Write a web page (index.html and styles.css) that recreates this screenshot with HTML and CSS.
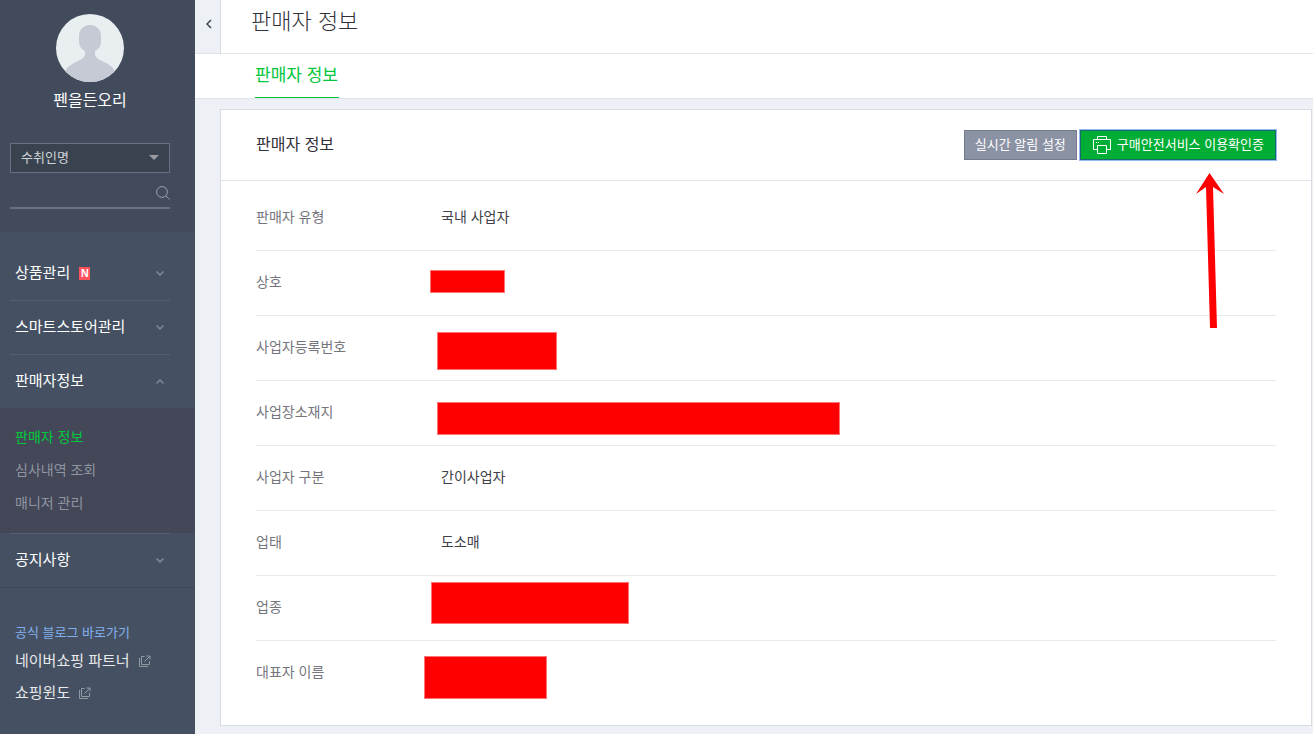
FILE: index.html
```html
<!DOCTYPE html>
<html lang="ko">
<head>
  <meta charset="UTF-8" />
  <meta name="viewport" content="width=device-width, initial-scale=1.0"/>
  <title>판매자 정보</title>
  <link rel="stylesheet" href="styles.css">
</head>
<body>

  <aside class="sidebar">
    <div class="profile">
      <svg class="avatar" viewBox="0 0 68 68" aria-hidden="true">
        <defs><clipPath id="round"><circle cx="34" cy="34" r="34"/></clipPath></defs>
        <g clip-path="url(#round)">
          <rect width="68" height="68" fill="#e9eef1"/>
          <path fill="#c5cad4" d="M34 11c7 0 11 5 11 11v6c0 4-2 7-6 9v3c0 3 3 5 7 7 6 3 10 5 12 9v12H10V56c2-4 6-6 12-9 4-2 7-4 7-7v-3c-4-2-6-5-6-9v-6c0-6 4-11 11-11z"/>
        </g>
      </svg>
      <div class="store-name">펜을든오리</div>
      <form class="search">
        <div class="select-wrap">
          <select aria-label="검색 조건">
            <option>수취인명</option>
          </select>
        </div>
        <div class="search-box">
          <input type="text" aria-label="검색어">
          <button type="button" aria-label="검색">
            <svg width="14" height="14" viewBox="0 0 14 14" fill="none" stroke="#99a0aa"><circle cx="6" cy="6" r="5.4"/><path d="M10 10l3.6 3.6"/></svg>
          </button>
        </div>
      </form>
    </div>

    <nav>
      <ul class="menu">
        <li><a href="#">상품관리 <span class="badge-new">N</span>
          <svg class="chevron" viewBox="0 0 8 5"><path d="M.5.5L4 4 7.5.5"/></svg></a></li>
        <li><a href="#">스마트스토어관리
          <svg class="chevron" viewBox="0 0 8 5"><path d="M.5.5L4 4 7.5.5"/></svg></a></li>
        <li><a href="#">판매자정보
          <svg class="chevron" viewBox="0 0 8 5"><path d="M.5 4.5L4 1l3.500 3.500"/></svg></a>
          <ul class="submenu">
            <li><a href="#" class="active">판매자 정보</a></li>
            <li><a href="#">심사내역 조회</a></li>
            <li><a href="#">매니저 관리</a></li>
          </ul>
        </li>
        <li><a href="#">공지사항
          <svg class="chevron" viewBox="0 0 8 5"><path d="M.5.5L4 4 7.5.5"/></svg></a></li>
      </ul>
    </nav>

    <div class="side-links">
      <a href="#" class="blog">공식 블로그 바로가기</a>
      <a href="#">네이버쇼핑 파트너
        <svg class="external" viewBox="0 0 12 12"><path d="M5.500 1.500h-3v8h8V6M.5 3v8.500H9M7.500 1h3.500v3.500M11 1L5.500 6.500"/></svg></a>
      <a href="#">쇼핑윈도
        <svg class="external" viewBox="0 0 12 12"><path d="M5.500 1.500h-3v8h8V6M.5 3v8.500H9M7.500 1h3.500v3.500M11 1L5.500 6.500"/></svg></a>
    </div>
  </aside>

  <main class="content">
    <header class="page-header">
      <button type="button" class="collapse" aria-label="메뉴 접기">
        <svg width="6" height="10" viewBox="0 0 6 10" fill="none" stroke="#3a4252" stroke-width="1.500"><path d="M5 1L1 5l4 4"/></svg>
      </button>
      <h1>판매자 정보</h1>
    </header>
    <div class="tabs">
      <a href="#" class="tab">판매자 정보</a>
    </div>

    <section class="card">
      <div class="card-header">
        <h2>판매자 정보</h2>
        <div class="buttons">
          <button type="button" class="btn btn-gray">실시간 알림 설정</button>
          <button type="button" class="btn btn-green">
            <svg width="18" height="18" viewBox="0 0 18 18" fill="none" stroke="#fff"><path d="M4.500 3.500v-3h9v3M4.500 13.500h-4v-10h17v10h-4M4.500 9.500h9v8h-9zM3 6.500h1M5 6.500h1"/></svg>
            <span>구매안전서비스 이용확인증</span>
          </button>
          <svg class="arrow" width="28" height="156" viewBox="0 0 28 156" aria-hidden="true"><path fill="#f00" d="M13.500 0L28 21l-11-7 4 141h-7L10 14 0 21z"/></svg>
        </div>
      </div>
      <dl class="info">
        <div class="row"><dt>판매자 유형</dt><dd>국내 사업자</dd></div>
        <div class="row"><dt>상호</dt><dd><span class="mask mask-name"></span></dd></div>
        <div class="row"><dt>사업자등록번호</dt><dd><span class="mask mask-number"></span></dd></div>
        <div class="row"><dt>사업장소재지</dt><dd><span class="mask mask-address"></span></dd></div>
        <div class="row"><dt>사업자 구분</dt><dd>간이사업자</dd></div>
        <div class="row"><dt>업태</dt><dd>도소매</dd></div>
        <div class="row"><dt>업종</dt><dd><span class="mask mask-type"></span></dd></div>
        <div class="row"><dt>대표자 이름</dt><dd><span class="mask mask-owner"></span></dd></div>
      </dl>
    </section>
  </main>

</body>
</html>
```
FILE: styles.css
```css
:root {
  --bg: #edf0f5;
  --side-top: #414b5c;
  --side: #455162;
  --side-sub: #434758;
  --line: #e0e3eb;
  --green: #00c73c;
}
* { box-sizing: border-box; margin:0; padding:0; }
body, button, input, select { font-family:'Noto Sans CJK KR', 'Noto Sans', sans-serif; }
body { display:flex; min-height:100vh; background: var(--bg); color:#303038; font-size:14px; line-height:20px; }
a { color: inherit; text-decoration:none; }
ul { list-style:none; }
button { cursor:pointer; }

/* sidebar */
.sidebar { flex:none; width:195px; background: var(--side); color:#fff; }
.profile { height:231px; padding:14px 25px 0 10px; background: var(--side-top); text-align:center; }
.avatar { display:block; width:68px; height:68px; margin:0 auto; }
.store-name { margin-top:5px; font-size:16px; line-height:24px; }
.search { margin-top:32px; }
.select-wrap { position:relative; }
.select-wrap::after {
  content:''; position:absolute; right:11px; top:12px;
  border:5px solid transparent; border-top-color:#9b9ba3; border-bottom:0; pointer-events:none;
}
.search select {
  display:block; width:100%; height:30px; padding:0 10px 3px; appearance:none;
  border:1px solid #667181; border-radius:0; background:#39434f; color:#d0d3d8; font-size:13px;
}
.search-box { display:flex; align-items:center; height:36px; padding-top:6px; border-bottom:2px solid #667181; }
.search-box input { flex:1; min-width:0; height:28px; border:0; background:none; color:#fff; outline:none; }
.search-box button { height:14px; border:0; background:none; }
.search-box svg { display:block; }

.menu { padding-top:15px; border-top:1px solid #414b5c; border-bottom:1px solid #3d4757; }
.menu > li > a {
  display:flex; align-items:center; height:54px; margin:0 25px 0 10px; padding:0 6px 4px 5px;
  border-bottom:1px solid #536072; font-size:15px;
}
.menu > li:nth-child(3) > a { height:53px; border-bottom:0; }
.menu > li:last-child > a { border-top:1px solid #536072; border-bottom:0; }
.badge-new {
  width:11px; height:13px; margin:3px 0 0 9px; background:#ff525d;
  font:bold 10px/13px 'Open Sans', sans-serif; text-align:center;
}
.chevron { width:8px; height:5px; margin:4px 0 0 auto; fill:none; stroke:#7f8998; stroke-width:1.5; }
.submenu { padding:12px 15px 14px; background: var(--side-sub); color:#8f95a1; }
.submenu a { display:block; line-height:33px; }
.submenu .active { color: var(--green); }
.side-links { display:flex; flex-direction:column; padding:32px 15px; color:#e9eaec; font-size:15px; line-height:32px; }
.side-links .blog { color:#82b0ee; font-size:13px; line-height:24px; }
.external { width:12px; height:12px; margin-left:5px; vertical-align:-1px; fill:none; stroke:#9299a3; }

/* page top */
.content { flex:1; min-width:0; }
.page-header { display:flex; height:54px; background:#fff; border-bottom:1px solid var(--line); }
.collapse { width:26px; padding:0 0 6px 2px; border:0; border-right:1px solid #d8dbe3; background: var(--bg); }
.page-header h1 { margin-left:30px; font-size:22px; font-weight:300; line-height:38px; }
.tabs { height:45px; padding-left:60px; background:#fff; border-bottom:1px solid var(--line); }
.tab { display:inline-block; height:44px; padding-right:1px; border-bottom:1px solid var(--green); color: var(--green); font-size:17px; line-height:40px; }

/* seller card */
.card { margin:10px 1px 8px 25px; background:#fff; border:1px solid #d8dbe3; }
.card-header { display:flex; align-items:center; justify-content:space-between; height:71px; padding:0 35px; border-bottom:1px solid var(--line); }
.card-header h2 { padding-bottom:4px; font-size:16px; font-weight:400; }
.buttons { position:relative; display:flex; gap:3px; }
.btn { display:flex; align-items:center; height:30px; padding:0 10px 3px; border:1px solid #747b8d; color:#fff; font-size:13px; }
.btn-gray { background:#8b92a4; }
.btn-green { gap:6px; padding:0 11px 3px 12px; background:#00ae35; border-color:#1a6b70; box-shadow:0 0 0 1px #92b8f5; }
.btn svg { margin-top:2px; }
.arrow { position:absolute; right:52px; top:43px; }

.info { padding:5px 35px 19px; }
.row { display:flex; padding:20px 0 24px; border-bottom:1px solid #e8eaee; }
.row:last-child { border-bottom-color:transparent; }
.row dt { width:185px; color:#75757d; }
.row dd { position:relative; flex:1; min-height:20px; color:#404048; }

/* blocks laid over private values */
.mask { position:absolute; background:#f00; border:1px solid #ff7474; }
.mask-name { left:-11px; top:-1px; width:75px; height:23px; }
.mask-number { left:-4px; top:-4px; width:120px; height:38px; }
.mask-address { left:-4px; top:1px; width:403px; height:33px; }
.mask-type { left:-10px; top:-14px; width:198px; height:42px; }
.mask-owner { left:-17px; top:-5px; width:123px; height:43px; }
```
